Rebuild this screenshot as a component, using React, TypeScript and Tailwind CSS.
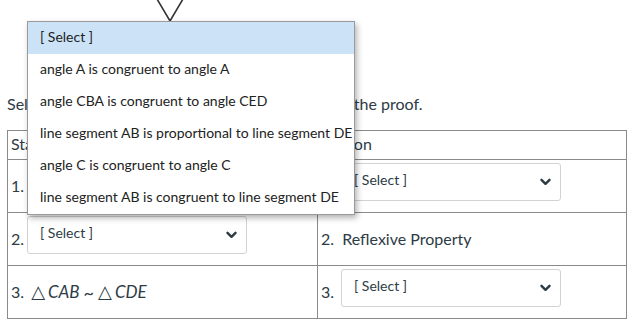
import React from 'react';

const Chevron: React.FC = () => (
    <svg width="11" height="8" viewBox="0 0 11 8" className="shrink-0">
        <path d="M1.5 1.8 L5.5 5.8 L9.5 1.8" fill="none" stroke="#2d3b45" strokeWidth={2.4} strokeLinecap="round" strokeLinejoin="round" />
    </svg>
);

const FakeSelect: React.FC = () => (
    <div className="w-[220px] h-[38px] mb-[11px] flex items-center justify-between pl-[12px] pr-[9px] pb-[5px] bg-white border border-[#cfd3d6] rounded-[3px] text-[14px] text-[#2d3b45]">
        <span>[ Select ]</span>
        <span className="pt-[4px]"><Chevron /></span>
    </div>
);

const options = [
    '[ Select ]',
    'angle A is congruent to angle A',
    'angle CBA is congruent to angle CED',
    'line segment AB is proportional to line segment DE',
    'angle C is congruent to angle C',
    'line segment AB is congruent to line segment DE',
];

const cell = 'border border-[#8a8a8a] p-0';

export default function App() {
    return (
        <div className="relative w-[635px] h-[328px] overflow-hidden bg-white text-[#2d3b45]" style={{ fontFamily: 'Lato, "Open Sans", sans-serif' }}>
            {/* bottom of the figure above the question */}
            <svg width="635" height="22" className="block">
                <path d="M157 -1 L170 21 L183 -1" fill="none" stroke="#333" strokeWidth={1.6} />
            </svg>

            <p className="mt-[70px] px-[7px] text-[16px] leading-[24px]">
                Select the missing steps and reasons to complete the proof.
            </p>

            <table className="mt-[14px] ml-[7px] w-[620px] border-collapse text-[16px] table-fixed">
                <thead>
                    <tr>
                        <th className={`${cell} w-[310px] text-left font-normal`}>
                            <div className="h-[28px] flex items-center pl-[3px] pb-[2px]">Statement</div>
                        </th>
                        <th className={`${cell} text-left font-normal`}>
                            <div className="h-[28px] flex items-center pl-[3px] pb-[2px]">Reason</div>
                        </th>
                    </tr>
                </thead>
                <tbody>
                    <tr>
                        <td className={cell}>
                            <div className="flex items-end h-[52px] pl-[3px]">
                                <span className="w-[16px] self-center">1.</span>
                                <FakeSelect />
                            </div>
                        </td>
                        <td className={cell}>
                            <div className="flex items-end h-[52px] pl-[3px]">
                                <span className="w-[20px] self-center">1.</span>
                                <FakeSelect />
                            </div>
                        </td>
                    </tr>
                    <tr>
                        <td className={cell}>
                            <div className="flex items-end h-[52px] pl-[3px]">
                                <span className="w-[16px] self-center">2.</span>
                                <FakeSelect />
                            </div>
                        </td>
                        <td className={cell}>
                            <div className="flex items-center h-[52px] pl-[3px]">2.&nbsp; Reflexive Property</div>
                        </td>
                    </tr>
                    <tr>
                        <td className={cell}>
                            <div className="flex items-center h-[52px] pl-[3px]">
                                <span>3.&nbsp;</span>
                                <span style={{ fontFamily: '"DejaVu Sans", sans-serif' }} className="text-[18px] leading-none ml-[3px]">△</span>
                                <i className="ml-[3px] text-[17px]">CAB</i>
                                <span className="mx-[4px] text-[18px]">~</span>
                                <span style={{ fontFamily: '"DejaVu Sans", sans-serif' }} className="text-[18px] leading-none">△</span>
                                <i className="ml-[3px] text-[17px]">CDE</i>
                            </div>
                        </td>
                        <td className={cell}>
                            <div className="flex items-end h-[52px] pl-[3px]">
                                <span className="w-[20px] self-center">3.</span>
                                <FakeSelect />
                            </div>
                        </td>
                    </tr>
                </tbody>
            </table>

            {/* open option list of the first statement select */}
            <ul className="absolute left-[27px] top-[21px] w-[328px] bg-white border border-[#9a9a9a] shadow-[2px_3px_6px_rgba(0,0,0,0.3)] text-[14px] text-[#222]">
                {options.map((opt, i) => (
                    <li key={i} className={`h-[32px] flex items-center pl-[12px] pb-[4px] whitespace-nowrap ${i === 0 ? 'bg-[#cce3f7]' : ''}`}>
                        {opt}
                    </li>
                ))}
            </ul>
        </div>
    );
}
